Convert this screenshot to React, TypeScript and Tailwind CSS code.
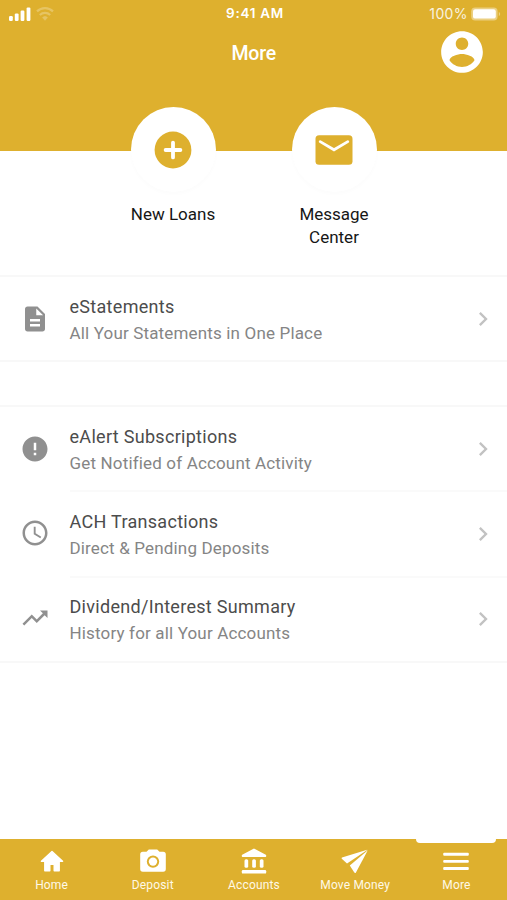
import React from "react";

const ICONS = {
  account:
    "M12 2C6.48 2 2 6.48 2 12s4.48 10 10 10 10-4.48 10-10S17.52 2 12 2zm0 3c1.66 0 3 1.34 3 3s-1.34 3-3 3-3-1.34-3-3 1.34-3 3-3zm0 14.2c-2.5 0-4.71-1.28-6-3.22.03-1.99 4-3.08 6-3.08 1.99 0 5.97 1.09 6 3.08-1.29 1.94-3.5 3.22-6 3.22z",
  document:
    "M14 2H6c-1.1 0-1.99.9-1.99 2L4 20c0 1.1.89 2 1.99 2H18c1.1 0 2-.9 2-2V8l-6-6zm2 16H8v-2h8v2zm0-4H8v-2h8v2zm-3-5V3.5L18.5 9H13z",
  alert:
    "M12 2C6.48 2 2 6.48 2 12s4.48 10 10 10 10-4.48 10-10S17.52 2 12 2zm1 15h-2v-2h2v2zm0-4h-2V7h2v6z",
  clock:
    "M11.99 2C6.47 2 2 6.48 2 12s4.47 10 9.99 10C17.52 22 22 17.52 22 12S17.52 2 11.99 2zM12 20c-4.42 0-8-3.58-8-8s3.58-8 8-8 8 3.58 8 8-3.58 8-8 8zm.5-13H11v6l5.25 3.15.75-1.23-4.5-2.67z",
  trending: "M16 6l2.29 2.29-4.88 4.88-4-4L2 16.59 3.41 18l6-6 4 4 6.3-6.29L22 12V6z",
  chevron: "M10 6L8.59 7.41 13.17 12l-4.58 4.59L10 18l6-6z",
};

const SECTIONS = [
  [{ icon: ICONS.document, title: "eStatements", subtitle: "All Your Statements in One Place" }],
  [
    { icon: ICONS.alert, title: "eAlert Subscriptions", subtitle: "Get Notified of Account Activity" },
    { icon: ICONS.clock, title: "ACH Transactions", subtitle: "Direct & Pending Deposits" },
    { icon: ICONS.trending, title: "Dividend/Interest Summary", subtitle: "History for all Your Accounts" },
  ],
];

const TABS = [
  {
    label: "Home",
    icon: (
      <path
        d="M15 5.6 4.4 15.2H7.8v9.6h5v-6.6h4.4v6.6h5v-9.6h3.4z"
        strokeWidth="1.4"
        stroke="currentColor"
        strokeLinejoin="round"
      />
    ),
  },
  {
    label: "Deposit",
    icon: (
      <>
        <path
          fillRule="evenodd"
          d="M10.8 3.5h8.4l2.3 2.2h3.7a2.6 2.6 0 0 1 2.6 2.6v14.8a2.6 2.6 0 0 1-2.6 2.6H4.8a2.6 2.6 0 0 1-2.6-2.6V8.3a2.6 2.6 0 0 1 2.6-2.6h3.7zM15 9.4a6.2 6.2 0 1 0 0 12.4 6.2 6.2 0 0 0 0-12.4z"
        />
        <circle cx="15" cy="15.6" r="4.2" />
      </>
    ),
  },
  {
    label: "Accounts",
    icon: (
      <>
        <path d="M15 2.6 26.8 8.8a.8.8 0 0 1 .4.7v.8a.7.7 0 0 1-.7.7h-23a.7.7 0 0 1-.7-.7v-.8a.8.8 0 0 1 .4-.7z" />
        <rect x="5.5" y="13.2" width="3.7" height="8.6" rx="1.5" />
        <rect x="13.2" y="13.2" width="3.7" height="8.6" rx="1.5" />
        <rect x="20.8" y="13.2" width="3.7" height="8.6" rx="1.5" />
        <rect x="2.8" y="24" width="24.4" height="3.6" rx="1.2" />
      </>
    ),
  },
  {
    label: "Move Money",
    icon: (
      <>
        <path d="M27.2 3.8 2 11.4q-.8.5-.2 1.4l5.2 4.6L27.2 4z" />
        <path d="M27.8 4.2 9.8 19.6l4.5 7q.7.9 1.5.1z" />
      </>
    ),
  },
  {
    label: "More",
    active: true,
    icon: (
      <>
        <rect x="2.2" y="6.8" width="25.6" height="2.9" rx="1" />
        <rect x="2.2" y="13.9" width="25.6" height="2.9" rx="1" />
        <rect x="2.2" y="21" width="25.6" height="2.9" rx="1" />
      </>
    ),
  },
];

const Icon = ({ path, className }: { path: string; className: string }) => (
  <svg viewBox="0 0 24 24" fill="currentColor" className={className}>
    <path d={path} />
  </svg>
);

const StatusBar = () => (
  <div className="grid h-[27px] grid-cols-3 items-center pl-[9px] pr-[6px]">
    <div className="flex items-center gap-[5px]">
      <svg viewBox="0 0 22 14" fill="currentColor" className="h-3.5 w-[22px]">
        <rect x="0" y="9" width="3.8" height="5" rx="1.2" />
        <rect x="5.8" y="6.4" width="3.8" height="7.6" rx="1.2" />
        <rect x="11.6" y="3.6" width="3.8" height="10.4" rx="1.2" />
        <rect x="17.6" y="0.4" width="3.8" height="13.6" rx="1.2" />
      </svg>
      <svg viewBox="0 0 18 14" fill="none" stroke="currentColor" strokeWidth="2.2" className="h-3.5 w-[18px] opacity-25">
        <path d="M1 4.4a11.5 11.5 0 0 1 16 0" />
        <path d="M3.8 8a7.6 7.6 0 0 1 10.4 0" />
        <path d="M6.4 10.6a3.6 3.6 0 0 1 5.2 0L9 13.4z" fill="currentColor" strokeWidth="0.4" />
      </svg>
    </div>
    <p className="-mr-px text-center font-['Inter'] text-[13.5px] font-semibold tracking-[0.7px] -ml-px">9:41 AM</p>
    <div className="flex items-center justify-end gap-[3px]">
      <span className="font-['Inter'] text-[14px] tracking-[0.4px] opacity-85">100%</span>
      <svg viewBox="0 0 30 14" className="h-3.5 w-[30px]">
        <rect x="0.2" y="0.4" width="26.4" height="13" rx="4" fill="white" fillOpacity="0.4" />
        <rect x="2" y="2.2" width="22.8" height="9.4" rx="2.2" fill="white" />
        <path d="M27.8 5v4q1.4-.6 1.4-2t-1.4-2z" fill="white" fillOpacity="0.4" />
      </svg>
    </div>
  </div>
);

const Shortcut = ({ label, children }: { label: string; children: React.ReactNode }) => (
  <div className="flex w-[85px] flex-col items-center">
    <div className="flex size-[85px] items-center justify-center rounded-full bg-white pt-px shadow-[0_2px_4px_rgba(0,0,0,0.015)]">
      {children}
    </div>
    <p className="mt-[11px] w-[100px] text-center text-[17px] leading-[22.5px] text-[#161616]">{label}</p>
  </div>
);

const App = () => {
  return (
    <div className="flex h-[900px] w-[507px] flex-col overflow-hidden bg-white font-['Roboto',sans-serif]">
      <header className="h-[151px] shrink-0 bg-[#deb02e] text-white">
        <StatusBar />
        <div className="grid grid-cols-3 items-center pr-[20.5px]">
          <h1 className="col-start-2 pl-[21px] pt-[3px] text-center text-[19.5px] font-medium tracking-[-0.2px]">More</h1>
          <Icon path={ICONS.account} className="size-[50px] justify-self-end" />
        </div>
      </header>

      <main className="flex-1">
        <div className="-mt-11 flex h-[168px] justify-center gap-[76px]">
          <Shortcut label="New Loans">
            <svg viewBox="0 0 38 38" className="size-[38px]">
              <circle cx="19" cy="19" r="18.4" fill="#deb02e" />
              <path d="M19 11.6v14.8M11.6 19h14.8" stroke="white" strokeWidth="3.8" strokeLinecap="round" />
            </svg>
          </Shortcut>
          <Shortcut label="Message Center">
            <svg viewBox="0 0 38 30" className="h-[30px] w-[38px]">
              <rect x="0.5" y="0.2" width="37" height="29.6" rx="3.6" fill="#deb02e" />
              <path d="m5.2 6.6 13.8 8.2 13.8-8.2" fill="none" stroke="white" strokeWidth="2.8" strokeLinecap="round" />
            </svg>
          </Shortcut>
        </div>

        <div className="flex flex-col gap-[43px]">
          {SECTIONS.map((rows, section) => (
            <div key={section} className="border-y-2 border-[#f8f8f8]">
              {rows.map((row, index) => (
                <div key={row.title} className="flex items-center">
                  <div className="flex w-[69.5px] justify-center text-[#909090]">
                    <Icon path={row.icon} className="size-[30px]" />
                  </div>
                  <div
                    className={`flex flex-1 items-center justify-between pr-[10.5px] ${
                      index > 0 ? "h-[85.5px] border-t-2 border-[#fafafa]" : "h-[83px]"
                    }`}
                  >
                    <div className="pt-0.5">
                      <h2 className="text-lg leading-[26px] tracking-[0.3px] text-[#4c4c4c]">{row.title}</h2>
                      <p className="text-[17px] leading-[26px] tracking-[0.16px] text-[#858585]">{row.subtitle}</p>
                    </div>
                    <Icon path={ICONS.chevron} className="size-7 text-[#c2c2c2]" />
                  </div>
                </div>
              ))}
            </div>
          ))}
        </div>
      </main>

      <nav className="grid h-[61.5px] shrink-0 grid-cols-5 bg-[#deb02e] pl-px text-white">
        {TABS.map((tab) => (
          <div key={tab.label} className="relative flex flex-col items-center pt-[7px]">
            {tab.active && <div className="absolute -top-px h-[5px] w-20 rounded-b-[4px] bg-white" />}
            <svg viewBox="0 0 30 30" fill="currentColor" className="size-[30px]">
              {tab.icon}
            </svg>
            <span className="text-xs leading-[18px] tracking-[0.15px] text-[#fff9e6]">{tab.label}</span>
          </div>
        ))}
      </nav>
    </div>
  );
};

export default App;
